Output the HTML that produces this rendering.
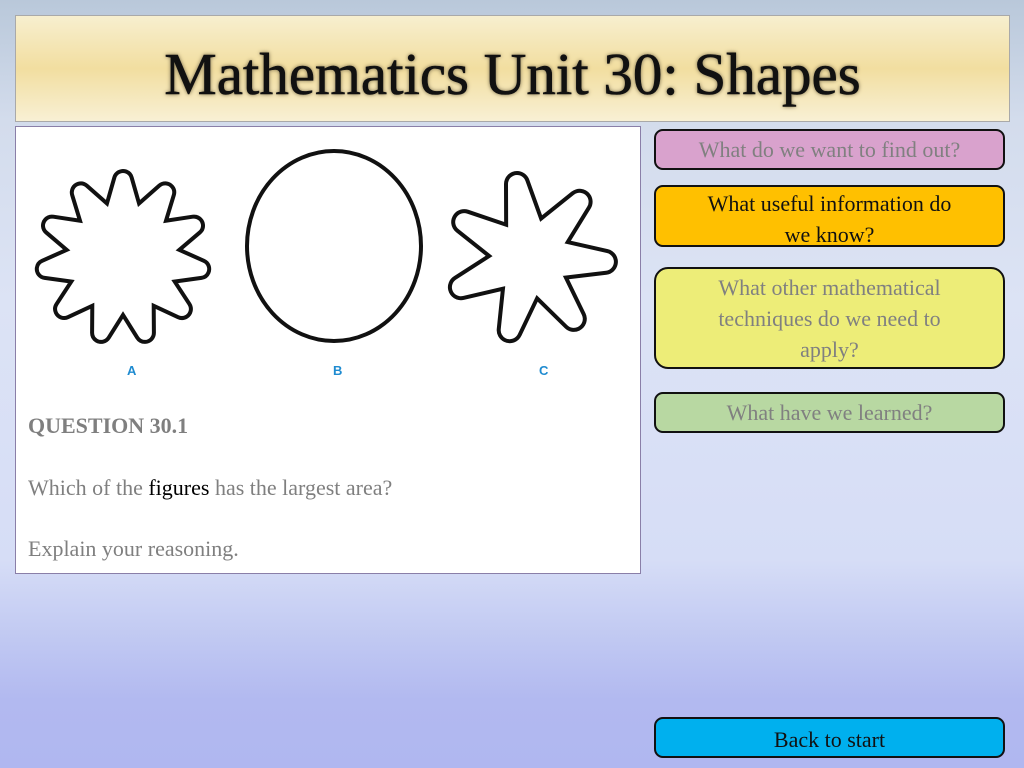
<!DOCTYPE html>
<html><head><meta charset="utf-8"><style>
*{margin:0;padding:0;box-sizing:border-box}
body{width:1024px;height:768px;position:relative;overflow:hidden;font-family:"Liberation Serif",serif;
background:linear-gradient(180deg,#b9c8da 0px,#d3dcec 120px,#dce3f5 300px,#d6ddf6 560px,#c0c8f2 640px,#b2b9f0 700px,#b0b7f0 768px);}
.hdr{position:absolute;left:15px;top:15px;width:995px;height:107px;border:1px solid #a9a9a9;
background:linear-gradient(180deg,#f7efcf 0%,#f2dea0 50%,#f8f0d4 100%);}
.hdr h1{position:absolute;left:0;right:0;top:28px;text-align:center;font-weight:normal;font-size:59px;line-height:60px;color:#111;
text-shadow:0 0 5px #9a8c66,0 0 3px #9a8c66,0 0 1px #9a8c66;-webkit-text-stroke:0.6px #111}
.panel{position:absolute;left:15px;top:126px;width:626px;height:448px;background:#fff;border:1px solid #8a7fa8}
.t{position:absolute;left:12px;font-size:22px;color:#7f7f7f}
.btn{position:absolute;left:654px;width:351px;border:2px solid #111;border-radius:9px;text-align:center;font-size:22px;line-height:31px}
.lbl{position:absolute;font:bold 13px "Liberation Sans",sans-serif;color:#1f8bd0}
</style></head><body>
<div class="hdr"><h1>Mathematics Unit 30: Shapes</h1></div>
<div class="panel">
<div class="t" style="top:286px;font-weight:bold">QUESTION 30.1</div>
<div class="t" style="top:348px">Which of the <span style="color:#000">figures</span> has the largest area?</div>
<div class="t" style="top:409px">Explain your reasoning.</div>
</div>
<svg style="position:absolute;left:0;top:0" width="640" height="400" viewBox="0 0 640 400">
<g stroke-linejoin="round" fill="#fff">
<polygon points="123,180 134.3,219.6 165.2,192.4 153.2,231.8 194,225.6 162.6,252.3 200.2,269 159.4,274.6 181.9,309 144.6,291.6 144.9,332.9 123,298 101.1,332.9 101.4,291.6 64.1,309 86.6,274.6 45.8,269 83.4,252.3 52,225.6 92.8,231.8 80.8,192.4 111.7,219.6" stroke="#111" stroke-width="22"/>
<polygon points="123,180 134.3,219.6 165.2,192.4 153.2,231.8 194,225.6 162.6,252.3 200.2,269 159.4,274.6 181.9,309 144.6,291.6 144.9,332.9 123,298 101.1,332.9 101.4,291.6 64.1,309 86.6,274.6 45.8,269 83.4,252.3 52,225.6 92.8,231.8 80.8,192.4 111.7,219.6" stroke="#fff" stroke-width="14"/>
<polygon points="517,184 536,236.8 579.6,201.8 550.3,249.4 604.9,261.8 549.3,268.5 573.8,318.9 533.8,279.7 509.7,330.2 515.5,274.5 460.9,287.2 508,256.9 464.2,222.1 517.2,240.1" stroke="#111" stroke-width="26"/>
<polygon points="517,184 536,236.8 579.6,201.8 550.3,249.4 604.9,261.8 549.3,268.5 573.8,318.9 533.8,279.7 509.7,330.2 515.5,274.5 460.9,287.2 508,256.9 464.2,222.1 517.2,240.1" stroke="#fff" stroke-width="18"/>
</g>
<ellipse cx="334" cy="246" rx="87" ry="95" fill="none" stroke="#111" stroke-width="4"/>
</svg>
<div class="lbl" style="left:127px;top:363px">A</div>
<div class="lbl" style="left:333px;top:363px">B</div>
<div class="lbl" style="left:539px;top:363px">C</div>
<div class="btn" style="top:129px;height:41px;background:#d9a2cd;color:#808080;line-height:37px">What do we want to find out?</div>
<div class="btn" style="top:185px;height:62px;background:#ffc000;color:#111;padding-top:1px">What useful information do<br>we know?</div>
<div class="btn" style="top:267px;height:102px;background:#eded78;color:#808080;border-radius:14px;padding-top:3px">What other mathematical<br>techniques do we need to<br>apply?</div>
<div class="btn" style="top:392px;height:41px;background:#b8d8a2;color:#808080;line-height:37px">What have we learned?</div>
<div class="btn" style="top:717px;height:41px;background:#00b0ee;color:#111;line-height:41px">Back to start</div>
</body></html>
